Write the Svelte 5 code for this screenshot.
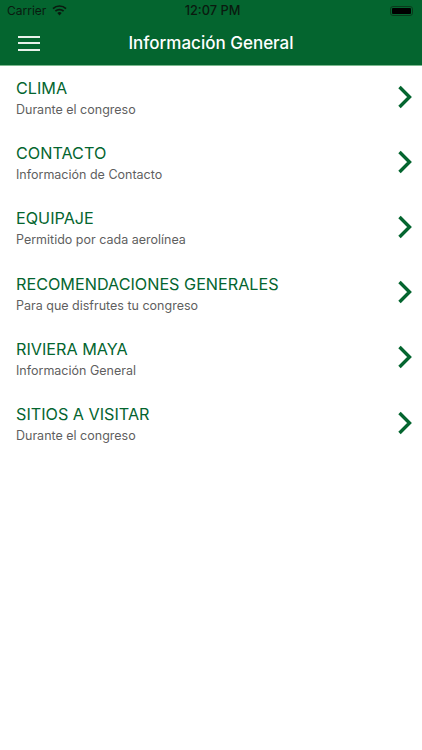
<script>
const items = [
  { title: 'CLIMA', sub: 'Durante el congreso' },
  { title: 'CONTACTO', sub: 'Información de Contacto' },
  { title: 'EQUIPAJE', sub: 'Permitido por cada aerolínea' },
  { title: 'RECOMENDACIONES GENERALES', sub: 'Para que disfrutes tu congreso' },
  { title: 'RIVIERA MAYA', sub: 'Información General' },
  { title: 'SITIOS A VISITAR', sub: 'Durante el congreso' }
]
</script>

<div class="page">
  <header class="top">
    <div class="status">
      <div class="status-left">
        <span>Carrier</span>
        <svg class="wifi" width="15" height="11" viewBox="0 0 15 11">
          <path d="M7.5 10.6 L5.3 8.1 A3.2 3.2 0 0 1 9.7 8.1 Z" fill="#0a1a0f"/>
          <path d="M3.4 6.2 A5.9 5.9 0 0 1 11.6 6.2" fill="none" stroke="#0a1a0f" stroke-width="1.7"/>
          <path d="M1 3.6 A9.4 9.4 0 0 1 14 3.6" fill="none" stroke="#0a1a0f" stroke-width="1.7"/>
        </svg>
      </div>
      <span class="time">12:07 PM</span>
      <div class="battery"><div class="battery-fill"></div></div>
    </div>
    <div class="nav">
      <div class="burger"><i></i><i></i><i></i></div>
      <div class="nav-title">Información General</div>
    </div>
  </header>

  <ul class="list">
    {#each items as item}
      <li class="row">
        <div class="text">
          <div class="title">{item.title}</div>
          <div class="sub">{item.sub}</div>
        </div>
        <svg class="chev" width="16" height="24" viewBox="0 0 16 24">
          <path d="M2.5 2 L12.5 12 L2.5 22" fill="none" stroke="#04652f" stroke-width="3.4"/>
        </svg>
      </li>
    {/each}
  </ul>
</div>

<style>
  :global(body) {
    margin: 0;
    background: #fff;
  }
  .page {
    width: 422px;
    height: 750px;
    overflow: hidden;
    font-family: Inter, "Liberation Sans", sans-serif;
  }
  .top {
    background: #04652f;
    height: 65px;
    border-bottom: 1px solid #7cb98f;
  }
  .status {
    height: 21px;
    display: flex;
    align-items: center;
    justify-content: space-between;
    padding: 0 10px 0 7px;
    position: relative;
    color: #0a1a0f;
    font-size: 12px;
  }
  .status-left {
    display: flex;
    align-items: center;
    gap: 6px;
  }
  .time {
    position: absolute;
    left: 3px;
    right: 0;
    text-align: center;
    font-weight: 500;
    font-size: 12.8px;
  }
  .battery {
    width: 23px;
    height: 10px;
    border: 1px solid #0a3a1c;
    border-radius: 3px;
    padding: 1px;
    box-sizing: border-box;
    margin-right: -1px;
  }
  .battery-fill {
    width: 100%;
    height: 100%;
    background: #000;
    border-radius: 1px;
  }
  .nav {
    height: 44px;
    display: flex;
    align-items: center;
    position: relative;
    padding-left: 18px;
  }
  .burger {
    width: 22px;
    display: flex;
    flex-direction: column;
    gap: 4.5px;
  }
  .burger i {
    display: block;
    height: 2px;
    background: #e8f2ea;
  }
  .nav-title {
    position: absolute;
    left: 0;
    right: 0;
    text-align: center;
    color: #fff;
    font-size: 17px;
    font-weight: 500;
  }
  .list {
    list-style: none;
    margin: 0;
    padding: 0;
  }
  .row {
    height: 65.2px;
    display: flex;
    align-items: center;
    justify-content: space-between;
    padding: 0 9px 0 16px;
    box-sizing: border-box;
  }
  .title {
    color: #04652f;
    font-size: 16.2px;
    line-height: 22px;
  }
  .sub {
    color: #5f5f5f;
    font-size: 12.5px;
    line-height: 21px;
  }
  .chev {
    flex: none;
    margin-bottom: 4px;
  }
</style>
